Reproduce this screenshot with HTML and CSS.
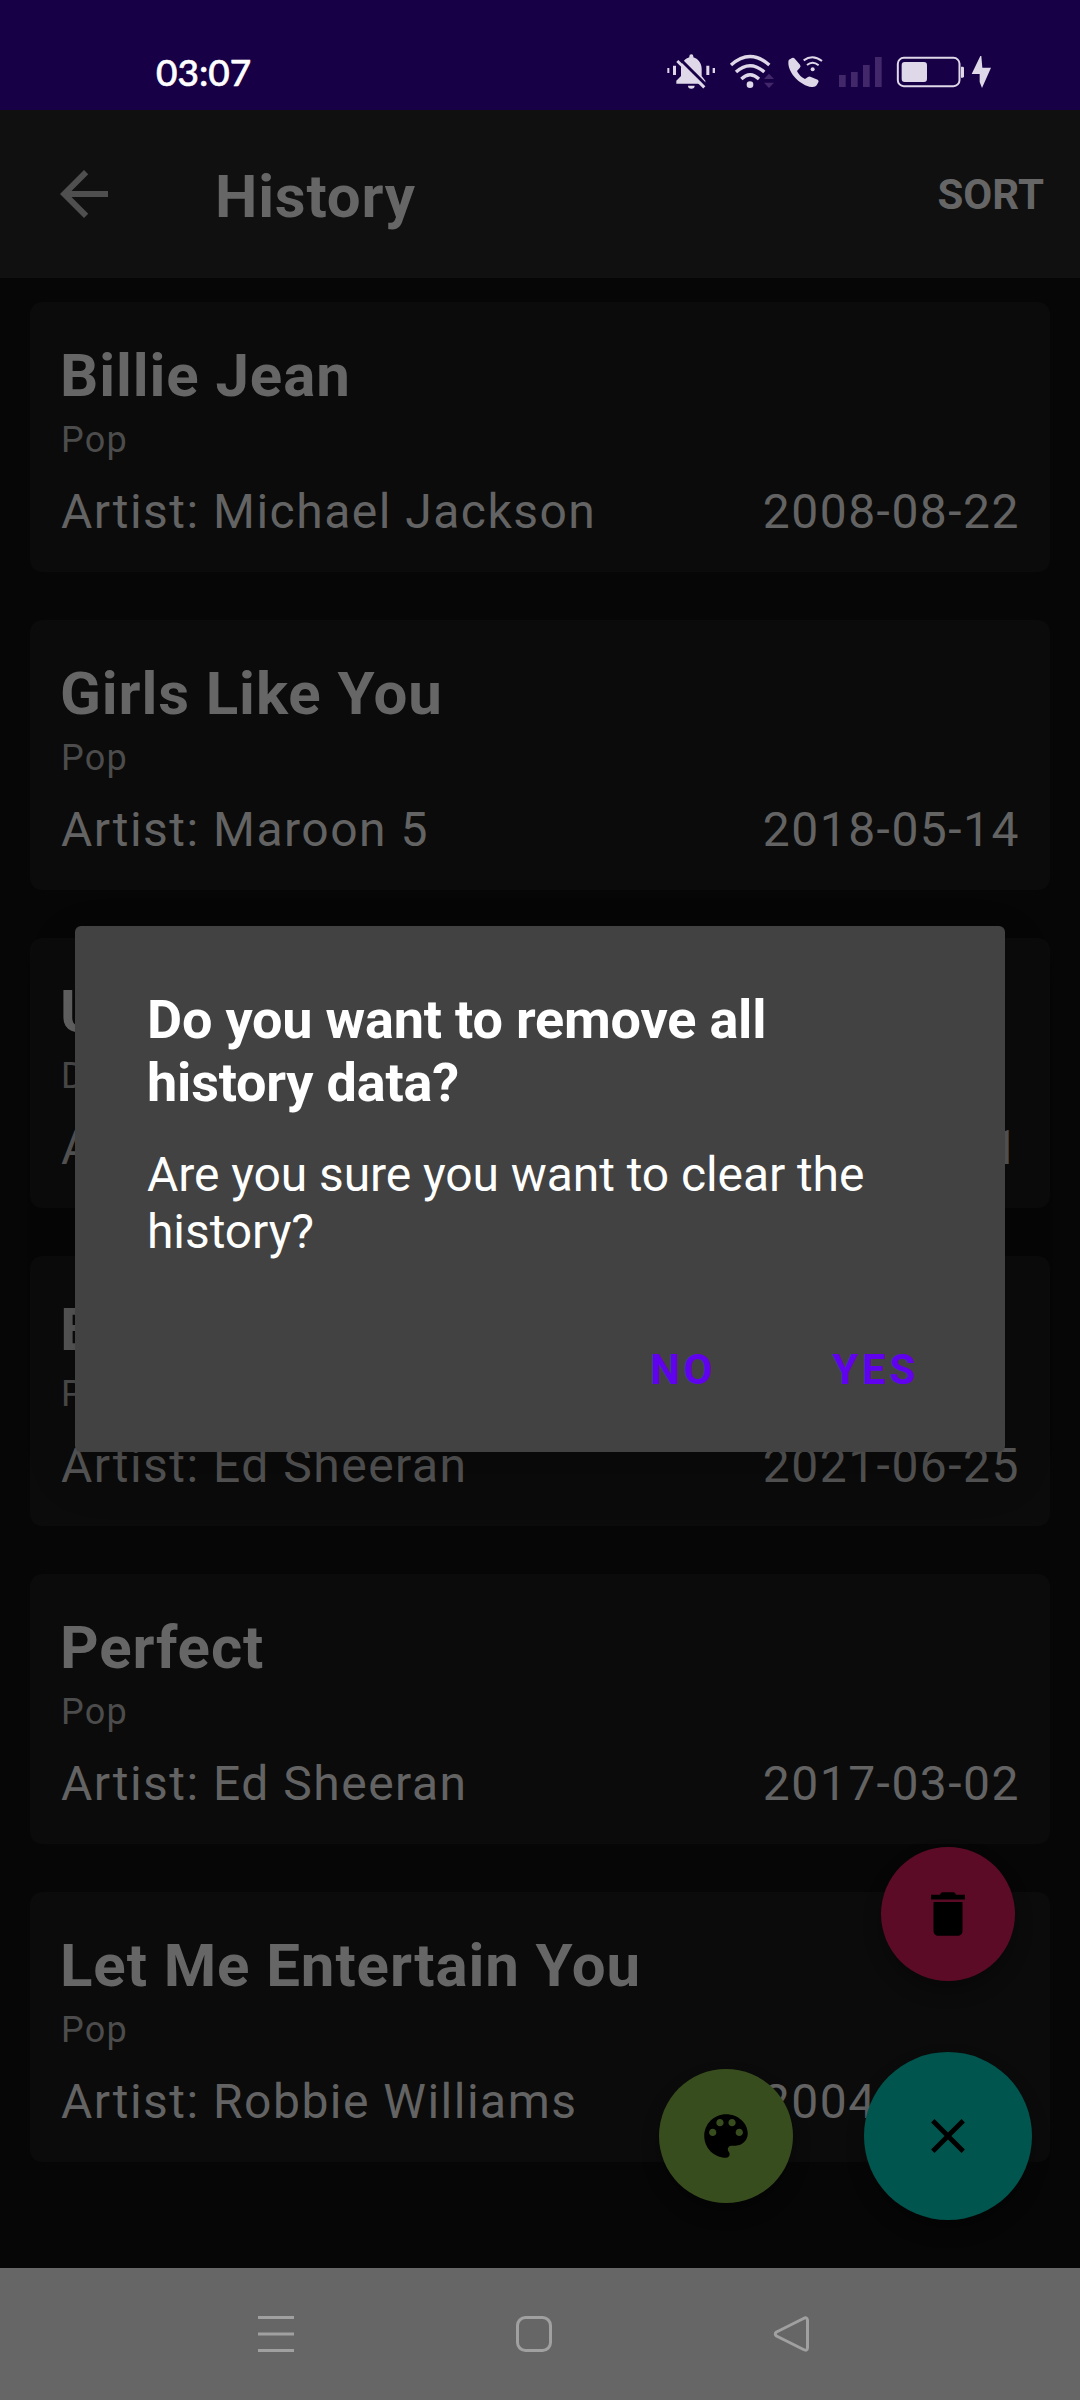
FILE: index.html
```html
<!DOCTYPE html>
<html lang="en">
<head>
<meta charset="utf-8">
<title>History</title>
<link rel="stylesheet" href="styles.css">
</head>
<body>
<div class="screen">
  <header class="status-bar">
    <span class="clock">03:07</span>
    <div class="status-icons">
      <svg width="55.67" height="38" viewBox="80 66 167 114">
        <path class="lit" d="M108 161v-9l14-14v-22c0-16 11-30 25-34v-3a6 6 0 0 1 12 0v3c14 4 25 18 25 34v22l11 14v9z M143 167h20a10 9 0 0 1-20 0z"/>
        <path class="knock" d="M119 87L198 166"/>
        <path class="slash" d="M111 93L192 172"/>
        <path class="lit" d="M81 114h6v15h-6zM98 107h9v28h-9zM198 107h9v28h-9zM217 114h7v15h-7z"/>
      </svg>
      <svg width="58.33" height="38" viewBox="247 66 175 114">
        <g class="wave wave-large"><path d="M271 105Q328 54 386 105"/><path d="M286 126Q328 88 371 126"/><path d="M302 147Q328 122 355 147"/></g>
        <circle class="lit" cx="328" cy="164" r="10"/>
        <path class="faint" d="M385 131l15 16h-30zM385 174l15-16h-30z"/>
      </svg>
      <svg width="49.67" height="38" viewBox="422 66 149 114">
        <path class="lit" d="M446 89L455 84Q460 82 464 87L479 104Q483 109 478 114L470 123Q477 139 494 147L503 141Q508 138 512 141L532 149Q537 152 534 157L529 166Q525 172 514 171C480 166 444 130 444 98Q444 91 446 89Z"/>
        <g class="wave wave-small"><path d="M490 91Q517 71 545 93"/><path d="M500 105Q517 91 535 106"/></g>
        <circle class="lit" cx="517" cy="118" r="6"/>
      </svg>
      <svg width="58.67" height="38" viewBox="571 66 176 114">
        <path class="faint" d="M595 135h20v36h-20zM631 126h20v45h-20zM667 105h20v66h-20zM703 81h20v90h-20z"/>
      </svg>
      <svg width="78.67" height="38" viewBox="747 66 236 114">
        <rect class="battery-case" x="773.500" y="83.500" width="185" height="85" rx="18"/>
        <rect class="lit" x="785" y="96" width="76" height="60" rx="9"/>
        <path class="lit" d="M963 110h5q4 0 4 4v25q0 4-4 4h-5z"/>
      </svg>
      <svg width="23" height="38" viewBox="983 66 69 114">
        <path class="lit" d="M1020 78L994 132H1018V156L1025 174L1052 113H1026L1023 78Z"/>
      </svg>
    </div>
  </header>

  <div class="app-bar">
    <svg class="back" width="72" height="72" viewBox="0 0 24 24"><path d="M20 11H7.830l5.590-5.590L12 4l-8 8 8 8 1.410-1.410L7.830 13H20z"/></svg>
    <h1 class="app-title">History</h1>
    <span class="sort">SORT</span>
  </div>

  <main class="song-list">
    <article class="card">
      <h2 class="song">Billie Jean</h2>
      <p class="genre">Pop</p>
      <p class="details"><span>Artist: Michael Jackson</span><span>2008-08-22</span></p>
    </article>
    <article class="card">
      <h2 class="song">Girls Like You</h2>
      <p class="genre">Pop</p>
      <p class="details"><span>Artist: Maroon 5</span><span>2018-05-14</span></p>
    </article>
    <article class="card">
      <h2 class="song">Unity</h2>
      <p class="genre">Dance</p>
      <p class="details shaded"><span>Artist: Alan Walker</span><span>2019-06-21</span></p>
    </article>
    <article class="card">
      <h2 class="song shaded">Bad Habits</h2>
      <p class="genre">Pop</p>
      <p class="details shaded"><span>Artist: Ed Sheeran</span><span>2021-06-25</span></p>
    </article>
    <article class="card">
      <h2 class="song">Perfect</h2>
      <p class="genre">Pop</p>
      <p class="details"><span>Artist: Ed Sheeran</span><span>2017-03-02</span></p>
    </article>
    <article class="card">
      <h2 class="song">Let Me Entertain You</h2>
      <p class="genre">Pop</p>
      <p class="details"><span>Artist: Robbie Williams</span><span>2004-10-18</span></p>
    </article>
  </main>

  <nav class="nav-bar">
    <svg width="258" height="48" viewBox="-129 -24 258 48"><path d="M-18-16.500H18M-18 0H18M-18 16.500H18"/></svg>
    <svg width="258" height="48" viewBox="-129 -24 258 48"><rect x="-16.500" y="-16.500" width="33" height="33" rx="8"/></svg>
    <svg width="258" height="48" viewBox="-129 -24 258 48"><path d="M-15.500-2L11.500-15.500Q15.500-17.500 15.500-13.500V13.500Q15.500 17.500 11.500 15.500L-15.500 2Q-18 0-15.500-2Z"/></svg>
  </nav>

  <div class="fab fab-delete"><svg viewBox="0 0 24 24"><path d="M6 19c0 1.100.9 2 2 2h8c1.100 0 2-.9 2-2V7H6v12zM19 4h-3.500l-1-1h-5l-1 1H5v2h14V4z"/></svg></div>
  <div class="fab fab-palette"><svg viewBox="0 0 24 24"><path d="M12 3c-4.970 0-9 4.030-9 9s4.030 9 9 9c.83 0 1.500-.67 1.500-1.500 0-.39-.15-.74-.39-1.010-.23-.26-.38-.61-.38-.99 0-.83.67-1.500 1.500-1.500H16c2.760 0 5-2.240 5-5 0-4.420-4.030-8-9-8zm-5.500 9c-.83 0-1.500-.67-1.500-1.500S5.670 9 6.500 9 8 9.670 8 10.500 7.330 12 6.500 12zm3-4C8.670 8 8 7.330 8 6.500S8.670 5 9.500 5s1.500.67 1.500 1.500S10.330 8 9.500 8zm5 0c-.83 0-1.500-.67-1.500-1.500S13.670 5 14.500 5s1.500.67 1.500 1.500S15.330 8 14.500 8zm3 4c-.83 0-1.500-.67-1.500-1.500S16.670 9 17.500 9s1.500.67 1.500 1.500-.67 1.500-1.500 1.500z"/></svg></div>
  <div class="fab fab-close"><svg viewBox="0 0 24 24"><path d="M19 6.410L17.590 5 12 10.590 6.410 5 5 6.410 10.590 12 5 17.590 6.410 19 12 13.410 17.590 19 19 17.590 13.410 12z"/></svg></div>

  <section class="dialog">
    <h2 class="dialog-title">Do you want to remove all<br>history data?</h2>
    <p class="dialog-message">Are you sure you want to clear the<br>history?</p>
    <div class="dialog-actions"><span>NO</span><span>YES</span></div>
  </section>
</div>
</body>
</html>
```
FILE: styles.css
```css
* { box-sizing: border-box; }
body, h1, h2, p { margin: 0; }
body { background: #060606; font-family: Roboto, "Liberation Sans", sans-serif; }

.screen {
  position: relative;
  display: flex;
  flex-direction: column;
  width: 1080px;
  height: 2400px;
  overflow: hidden;
  background: #060606;
}

.status-bar {
  display: flex;
  justify-content: space-between;
  height: 110px;
  padding: 0 89px 0 156px;
  background: #180047;
}
.clock {
  padding-top: 49px;
  color: #fff;
  font: 500 37px/46px Lato, Roboto, sans-serif;
  -webkit-text-stroke: 0.6px #fff;
}
.status-icons { display: flex; padding-top: 52px; }
.lit { fill: #ded8e8; }
.faint { fill: #42286b; }
.slash, .knock { fill: none; stroke-width: 9; }
.slash { stroke: #ded8e8; }
.knock { stroke: #180047; }
.wave { fill: none; stroke: #ded8e8; }
.wave-large { stroke-width: 10; }
.wave-small { stroke-width: 6; }
.battery-case { fill: none; stroke: #ded8e8; stroke-width: 6; }

.app-bar {
  display: flex;
  align-items: center;
  height: 168px;
  padding: 0 36px 0 48px;
  background: #101010;
  color: #666;
}
.back { fill: #4f4f4f; }
.app-title {
  flex: 1;
  margin: 5px 0 0 95px;
  font-size: 60px;
  font-weight: 700;
  line-height: 70px;
  letter-spacing: 0.0135em;
}
.sort { padding-top: 2px; font-size: 42px; font-weight: 700; line-height: 50px; }

.song-list {
  flex: 1;
  display: flex;
  flex-direction: column;
  gap: 48px;
  padding: 24px 30px 0;
}
.card {
  height: 270px;
  padding: 39px 30px 0 31px;
  border-radius: 12px;
  background: #0b0b0b;
}
.song {
  margin-left: -1px;
  color: #666;
  font-size: 60px;
  font-weight: 700;
  line-height: 70px;
  letter-spacing: 0.015em;
}
.genre {
  margin-top: 8px;
  color: #4c4c4c;
  font-size: 36px;
  line-height: 42px;
  letter-spacing: 0.0333em;
}
.details {
  display: flex;
  justify-content: space-between;
  margin-top: 23px;
  color: #636363;
  font-size: 48px;
  line-height: 56px;
  letter-spacing: 0.031em;
}
.shaded { color: #575757; }

.nav-bar {
  display: flex;
  align-items: center;
  height: 132px;
  padding-left: 147px;
  background: #666;
}
.nav-bar svg { fill: none; stroke: #a0a0a0; stroke-width: 3; }

.fab {
  position: absolute;
  display: flex;
  align-items: center;
  justify-content: center;
  width: 134px;
  height: 134px;
  border-radius: 50%;
  box-shadow: 0 10px 18px rgba(0, 0, 0, 0.3);
}
.fab svg { width: 58px; height: 58px; fill: #000; }
.fab-delete { left: 881px; top: 1847px; background: #5c0b26; }
.fab-palette { left: 659px; top: 2069px; background: #384d1e; }
.fab-close { left: 864px; top: 2052px; width: 168px; height: 168px; background: #00564e; }

.dialog {
  position: absolute;
  left: 75px;
  top: 926px;
  width: 930px;
  height: 526px;
  padding: 62px 72px 0;
  border-radius: 6px;
  background: #424242;
  box-shadow: 0 20px 50px rgba(0, 0, 0, 0.2);
  color: #fff;
}
.dialog-title { font-size: 54px; font-weight: 700; line-height: 63px; letter-spacing: -0.2px; }
.dialog-message { margin-top: 32px; font-size: 48px; line-height: 57px; letter-spacing: -0.08px; }
.dialog-actions {
  display: flex;
  justify-content: flex-end;
  gap: 116px;
  margin-top: 85px;
  padding-right: 14px;
  color: #6002ee;
  font-size: 42px;
  font-weight: 700;
  line-height: 50px;
  letter-spacing: 0.0893em;
}
```
